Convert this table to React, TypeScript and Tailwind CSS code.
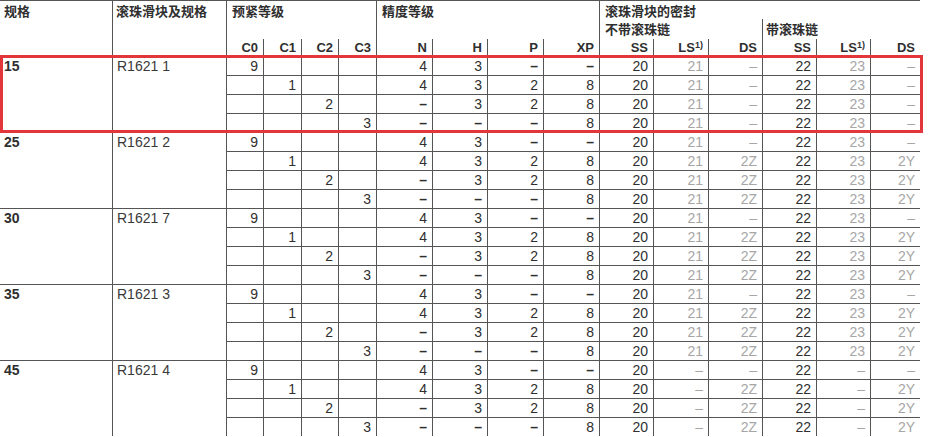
import React from 'react';

const COLS =
  'grid grid-cols-[112px_114px_37px_38px_37px_38px_56px_55px_56px_56px_54px_55px_54px_54px_54px_50px]';

const LINE = 'border-[#555555]';
const DARK = 'text-[#2f2f2f]';
const GRAY = 'text-[#a6a6a6]';

type SealType = 'A' | 'B' | 'C';

const groups: { size: string; code: string; seal: SealType }[] = [
  { size: '15', code: 'R1621 1', seal: 'A' },
  { size: '25', code: 'R1621 2', seal: 'B' },
  { size: '30', code: 'R1621 7', seal: 'B' },
  { size: '35', code: 'R1621 3', seal: 'B' },
  { size: '45', code: 'R1621 4', seal: 'C' },
];

const precision = [
  ['4', '3', '–', '–'],
  ['4', '3', '2', '8'],
  ['–', '3', '2', '8'],
  ['–', '–', '–', '8'],
];

const preload = ['9', '1', '2', '3'];

function sealRow(t: SealType, r: number): string[] {
  if (t === 'A') return ['20', '21', '–', '22', '23', '–'];
  if (t === 'B') return r === 0 ? ['20', '21', '–', '22', '23', '–'] : ['20', '21', '2Z', '22', '23', '2Y'];
  return r === 0 ? ['20', '–', '–', '22', '–', '–'] : ['20', '–', '2Z', '22', '–', '2Y'];
}

function Cell({ v, gray }: { v: string; gray?: boolean }) {
  const boldDash = !gray && v === '–';
  return (
    <div
      className={`h-[19px] border-l border-t ${LINE} pr-[5px] text-right text-[14px] leading-[18px] ${gray ? GRAY : DARK} ${boldDash ? 'font-bold' : ''}`}
    >
      {v}
    </div>
  );
}

function Group({ g }: { g: (typeof groups)[number] }) {
  return (
    <div className={`${COLS} grid-rows-[19px_19px_19px_19px]`}>
      <div className={`row-span-4 border-t ${LINE} pl-[4px] text-[14px] font-bold leading-[18px] ${DARK}`}>{g.size}</div>
      <div className={`row-span-4 border-l border-t ${LINE} pl-[4px] text-[14px] leading-[18px] text-[#3a3a3a]`}>
        {g.code}
      </div>
      {[0, 1, 2, 3].map((r) => (
        <React.Fragment key={r}>
          {[0, 1, 2, 3].map((c) => (
            <Cell key={'p' + c} v={c === r ? preload[r] : ''} />
          ))}
          {precision[r].map((v, c) => (
            <Cell key={'a' + c} v={v} />
          ))}
          {sealRow(g.seal, r).map((v, c) => (
            <Cell key={'s' + c} v={v} gray={c === 1 || c === 2 || c === 4 || c === 5} />
          ))}
        </React.Fragment>
      ))}
    </div>
  );
}

function Sub({ children, col }: { children: React.ReactNode; col: string }) {
  return (
    <div className={`${col} row-start-3 border-l ${LINE} pr-[5px] text-right text-[13px] font-bold leading-[17px] ${DARK}`}>
      {children}
    </div>
  );
}

export default function App() {
  return (
    <div className="relative h-[437px] w-[931px] overflow-hidden bg-white font-['Liberation_Sans','Noto_Sans_CJK_SC',sans-serif]">
      <div className="w-[920px]">
        <div className={`${COLS} grid-rows-[18px_20px_17px] border-t ${LINE} ${DARK}`}>
          <div className="col-start-1 row-span-3 row-start-1 pl-[4px] pt-[3px] text-[13px] font-bold leading-[16px]">规格</div>
          <div className={`col-start-2 row-span-3 row-start-1 border-l ${LINE} pl-[3px] pt-[3px] text-[13px] font-bold leading-[16px]`}>
            滚珠滑块及规格
          </div>
          <div className={`col-span-4 col-start-3 row-span-2 row-start-1 border-l ${LINE} pl-[5px] pt-[3px] text-[13px] font-bold leading-[16px]`}>
            预紧等级
          </div>
          <div className={`col-span-4 col-start-7 row-span-2 row-start-1 border-l ${LINE} pl-[5px] pt-[3px] text-[13px] font-bold leading-[16px]`}>
            精度等级
          </div>
          <div className={`col-span-6 col-start-11 row-start-1 border-l ${LINE} pl-[5px] pt-[3px] text-[13px] font-bold leading-[16px]`}>
            滚珠滑块的密封
          </div>
          <div className={`col-span-3 col-start-11 row-start-2 border-l ${LINE} pl-[5px] pt-[3px] text-[13px] font-bold leading-[16px]`}>
            不带滚珠链
          </div>
          <div className={`col-span-3 col-start-14 row-start-2 border-l ${LINE} pl-[3px] pt-[3px] text-[13px] font-bold leading-[16px]`}>
            带滚珠链
          </div>
          <Sub col="col-start-3">C0</Sub>
          <Sub col="col-start-4">C1</Sub>
          <Sub col="col-start-5">C2</Sub>
          <Sub col="col-start-6">C3</Sub>
          <Sub col="col-start-7">N</Sub>
          <Sub col="col-start-8">H</Sub>
          <Sub col="col-start-9">P</Sub>
          <Sub col="col-start-10">XP</Sub>
          <Sub col="col-start-11">SS</Sub>
          <Sub col="col-start-12">
            LS<span className="relative -top-[4px] text-[9px]">1)</span>
          </Sub>
          <Sub col="col-start-13">DS</Sub>
          <Sub col="col-start-14">SS</Sub>
          <Sub col="col-start-15">
            LS<span className="relative -top-[4px] text-[9px]">1)</span>
          </Sub>
          <Sub col="col-start-16">DS</Sub>
        </div>
        {groups.map((g) => (
          <Group key={g.size} g={g} />
        ))}
      </div>
      <div className="absolute left-0 top-[55px] h-[78px] w-[923px] border-[3px] border-[#e2363b]" />
    </div>
  );
}
